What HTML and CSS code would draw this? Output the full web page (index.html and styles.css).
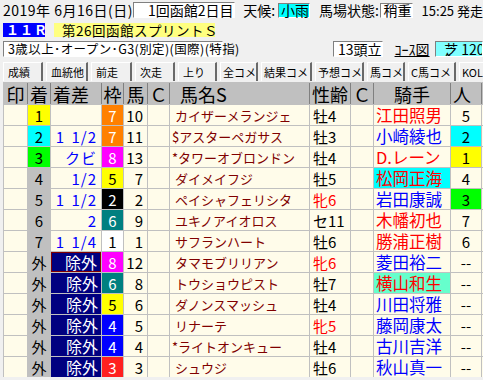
FILE: index.html
```html
<!DOCTYPE html>
<html lang="ja">
<head>
<meta charset="utf-8">
<link rel="stylesheet" href="styles.css">
</head>
<body>
<div class="page">
  <div class="r1">
    <span class="date">2019年 6月16日(日)</span>
    <span class="box kaisai">1回函館2日目</span>
    <span class="lbl tenko">天候:</span>
    <span class="box weather">小雨</span>
    <span class="lbl baba">馬場状態:</span>
    <span class="box going">稍重</span>
    <span class="time">15:25 発走</span>
  </div>
  <div class="r2">
    <span class="rnum">１１Ｒ</span>
    <span class="rname">第26回函館スプリントＳ</span>
  </div>
  <div class="r3">
    <span class="box cond">3歳以上･オープン･G3(別定)(国際)(特指)</span>
    <span class="box toso">13頭立</span>
    <span class="course-link">ｺｰｽ図</span>
    <span class="box course">芝 1200m</span>
  </div>
  <div class="tabs">
    <span class="tab">成績</span>
    <span class="tab">血統他</span>
    <span class="tab">前走</span>
    <span class="tab">次走</span>
    <span class="tab">上り</span>
    <span class="tab">全コメ</span>
    <span class="tab">結果コメ</span>
    <span class="tab">予想コメ</span>
    <span class="tab">馬コメ</span>
    <span class="tab">C馬コメ</span>
    <span class="tab">KOL</span>
  </div>
  <div class="grid">
    <div class="h">印</div><div class="h">着</div><div class="h hl">着差</div><div class="h">枠</div><div class="h">馬</div><div class="h">Ｃ</div><div class="h hname">馬名S</div><div class="h">性齢</div><div class="h">Ｃ</div><div class="h">騎手</div><div class="h hl">人</div><div class="h"></div>

    <div class="c"></div><div class="c ch y">1</div><div class="c sa"></div><div class="c w w7">7</div><div class="c num">10</div><div class="c"></div><div class="c nm np">カイザーメランジェ</div><div class="c sx">牡4</div><div class="c"></div><div class="c jk red">江田照男</div><div class="c pop">5</div><div class="c"></div>

    <div class="c"></div><div class="c ch cy">2</div><div class="c sa">1 1/2</div><div class="c w w7">7</div><div class="c num">11</div><div class="c"></div><div class="c nm">$アスターペガサス</div><div class="c sx">牡3</div><div class="c"></div><div class="c jk blue">小崎綾也</div><div class="c pop cy">2</div><div class="c"></div>

    <div class="c"></div><div class="c ch g">3</div><div class="c sa">クビ</div><div class="c w w8">8</div><div class="c num">13</div><div class="c"></div><div class="c nm">*タワーオブロンドン</div><div class="c sx">牡4</div><div class="c"></div><div class="c jk red">D.レーン</div><div class="c pop y">1</div><div class="c"></div>

    <div class="c"></div><div class="c ch gr">4</div><div class="c sa">1/2</div><div class="c w w5">5</div><div class="c num">7</div><div class="c"></div><div class="c nm np">ダイメイフジ</div><div class="c sx">牡5</div><div class="c"></div><div class="c jk red cy">松岡正海</div><div class="c pop">4</div><div class="c"></div>

    <div class="c"></div><div class="c ch gr">5</div><div class="c sa">1 1/2</div><div class="c w w2">2</div><div class="c num">2</div><div class="c"></div><div class="c nm np">ペイシャフェリシタ</div><div class="c sx red">牝6</div><div class="c"></div><div class="c jk blue">岩田康誠</div><div class="c pop g">3</div><div class="c"></div>

    <div class="c"></div><div class="c ch gr">6</div><div class="c sa">2</div><div class="c w w6">6</div><div class="c num">9</div><div class="c"></div><div class="c nm np">ユキノアイオロス</div><div class="c sx">セ11</div><div class="c"></div><div class="c jk red">木幡初也</div><div class="c pop">7</div><div class="c"></div>

    <div class="c"></div><div class="c ch gr">7</div><div class="c sa">1 1/4</div><div class="c w w1">1</div><div class="c num">1</div><div class="c"></div><div class="c nm np">サフランハート</div><div class="c sx">牡6</div><div class="c"></div><div class="c jk red">勝浦正樹</div><div class="c pop">6</div><div class="c"></div>

    <div class="c"></div><div class="c ch gr">外</div><div class="c jo sel">除外</div><div class="c w w8">8</div><div class="c num">12</div><div class="c"></div><div class="c nm np">タマモブリリアン</div><div class="c sx red">牝6</div><div class="c"></div><div class="c jk blue">菱田裕二</div><div class="c pop">--</div><div class="c"></div>

    <div class="c"></div><div class="c ch gr">外</div><div class="c jo">除外</div><div class="c w w6">6</div><div class="c num">8</div><div class="c"></div><div class="c nm np">トウショウピスト</div><div class="c sx">牡7</div><div class="c"></div><div class="c jk red aq">横山和生</div><div class="c pop">--</div><div class="c"></div>

    <div class="c"></div><div class="c ch gr">外</div><div class="c jo">除外</div><div class="c w w5">5</div><div class="c num">6</div><div class="c"></div><div class="c nm np">ダノンスマッシュ</div><div class="c sx">牡4</div><div class="c"></div><div class="c jk blue">川田将雅</div><div class="c pop">--</div><div class="c"></div>

    <div class="c"></div><div class="c ch gr">外</div><div class="c jo">除外</div><div class="c w w4">4</div><div class="c num">5</div><div class="c"></div><div class="c nm np">リナーテ</div><div class="c sx red">牝5</div><div class="c"></div><div class="c jk blue">藤岡康太</div><div class="c pop">--</div><div class="c"></div>

    <div class="c"></div><div class="c ch gr">外</div><div class="c jo">除外</div><div class="c w w4">4</div><div class="c num">4</div><div class="c"></div><div class="c nm">*ライトオンキュー</div><div class="c sx">牡4</div><div class="c"></div><div class="c jk blue">古川吉洋</div><div class="c pop">--</div><div class="c"></div>

    <div class="c"></div><div class="c ch gr">外</div><div class="c jo">除外</div><div class="c w w3">3</div><div class="c num">3</div><div class="c"></div><div class="c nm np">シュウジ</div><div class="c sx">牡6</div><div class="c"></div><div class="c jk blue">秋山真一</div><div class="c pop">--</div><div class="c"></div>
  </div>
</div>
</body>
</html>
```

FILE: styles.css
```css
* { box-sizing: border-box; }
html, body { margin: 0; padding: 0; }
body {
  background: #f0f0f0;
  font-family: "Noto Sans CJK JP", sans-serif;
  color: #000;
  width: 483px;
  height: 380px;
  overflow: hidden;
}
.page { width: 483px; overflow: hidden; }

.r1 {
  display: flex;
  align-items: center;
  height: 20px;
  font-size: 14px;
  white-space: nowrap;
}
.date { margin-left: 3px; width: 132px; letter-spacing: 0.5px; }
.box {
  display: flex;
  align-items: center;
  background: #fff;
  border-top: 1px solid #808080;
  border-left: 1px solid #808080;
  border-right: 1px solid #fff;
  border-bottom: 1px solid #fff;
  white-space: nowrap;
  line-height: 1;
}
.kaisai { width: 110px; height: 16px; padding-left: 14px; }
.tenko { margin-left: 8px; width: 38px; }
.weather { width: 32px; height: 15px; background: #00ffff; padding-left: 2px; }
.baba { margin-left: 9px; width: 66px; }
.going { width: 34px; height: 15px; padding-left: 3px; }
.time { margin-left: 9px; font-size: 13px; }

.r2 {
  display: flex;
  margin-top: 3px;
  height: 14px;
  white-space: nowrap;
}
.rnum {
  margin-left: 3px;
  width: 42px;
  background: #0000ff;
  color: #fff;
  font-size: 13px;
  font-weight: bold;
  letter-spacing: 1px;
  line-height: 14px;
  padding-left: 3px;
}
.rname {
  margin-left: 9px;
  width: 161px;
  background: #ffff80;
  font-size: 13.5px;
  letter-spacing: 0.5px;
  line-height: 14px;
  padding-left: 8px;
}

.r3 {
  display: flex;
  margin-top: 4px;
  height: 16px;
  font-size: 13px;
  white-space: nowrap;
}
.cond { margin-left: 3px; width: 220px; padding-left: 4px; font-size: 12.5px; letter-spacing: 0.4px; }
.toso { margin-left: 110px; width: 50px; padding-left: 4px; font-size: 14px; }
.course-link { margin-left: 12px; width: 43px; text-decoration: underline; font-size: 14px; line-height: 16px; }
.course { width: 50px; background: #80ffff; padding-left: 8px; font-size: 14px; overflow: hidden; }

.tabs {
  display: grid;
  grid-template-columns: 40px 42px 41px 40px 39px 38px 51px 49px 38px 48px 30px;
  column-gap: 3px;
  margin-top: 5px;
  margin-left: 3px;
  height: 19px;
  font-size: 11px;
  white-space: nowrap;
  overflow: hidden;
}
.tab {
  background: #f0f0f0;
  border-top: 1px solid #fff;
  border-left: 1px solid #fff;
  border-right: 2px solid #696969;
  padding-left: 2px;
  line-height: 18px;
  overflow: hidden;
}
.tab:nth-child(-n+5) { padding-left: 4px; }

.grid {
  display: grid;
  grid-template-columns: 23px 22px 50px 21px 23px 21px 139px 40px 22px 76px 30px 1px;
  grid-template-rows: 21px repeat(13, 20px);
  gap: 1px;
  padding: 1px 0 0 1px;
  margin-top: 1px;
  margin-left: 3px;
  width: 480px;
  background: #c0c0c0;
  white-space: nowrap;
}
.h {
  background: #c0c0c0;
  box-shadow: 1px 0 0 #808080;
  font-size: 18px;
  display: flex;
  align-items: center;
  justify-content: center;
  line-height: 1;
}
.hl { justify-content: flex-start; padding-left: 2px; }
.hname { justify-content: flex-start; padding-left: 10px; }

.c {
  background: #fffcea;
  display: flex;
  align-items: center;
  line-height: 1;
  font-size: 15px;
}
.ch { justify-content: center; }
.sa {
  justify-content: flex-end;
  padding-right: 4px;
  color: #0000ff;
  white-space: pre;
  letter-spacing: 1px;
  word-spacing: 2px;
}
.w { justify-content: center; }
.num { justify-content: flex-end; padding-right: 4px; }
.nm { color: #800000; font-size: 13px; padding-left: 2px; }
.np { padding-left: 5px; }
.sx { padding-left: 3px; }
.jk { font-size: 16.5px; padding-left: 2px; }
.pop { justify-content: center; }
.jo {
  background: #000080;
  color: #fff;
  font-size: 16px;
  justify-content: flex-end;
  padding-right: 3px;
}
.sel { border: 1px solid #800000; }

.y { background: #ffff00; }
.cy { background: #00ffff; }
.g { background: #00ff00; }
.gr { background: #c0c0c0; }
.aq { background: #66ffcc; }
.red { color: #ff0000; }
.blue { color: #0000ff; }

.w1 { background: #ffffff; color: #000; }
.w2 { background: #000000; color: #fff; }
.w3 { background: #ff2020; color: #fff; }
.w4 { background: #0000ff; color: #fff; }
.w5 { background: #ffff00; color: #000; }
.w6 { background: #008080; color: #fff; }
.w7 { background: #ff8000; color: #fff; }
.w8 { background: #ff00ff; color: #fff; }
```
